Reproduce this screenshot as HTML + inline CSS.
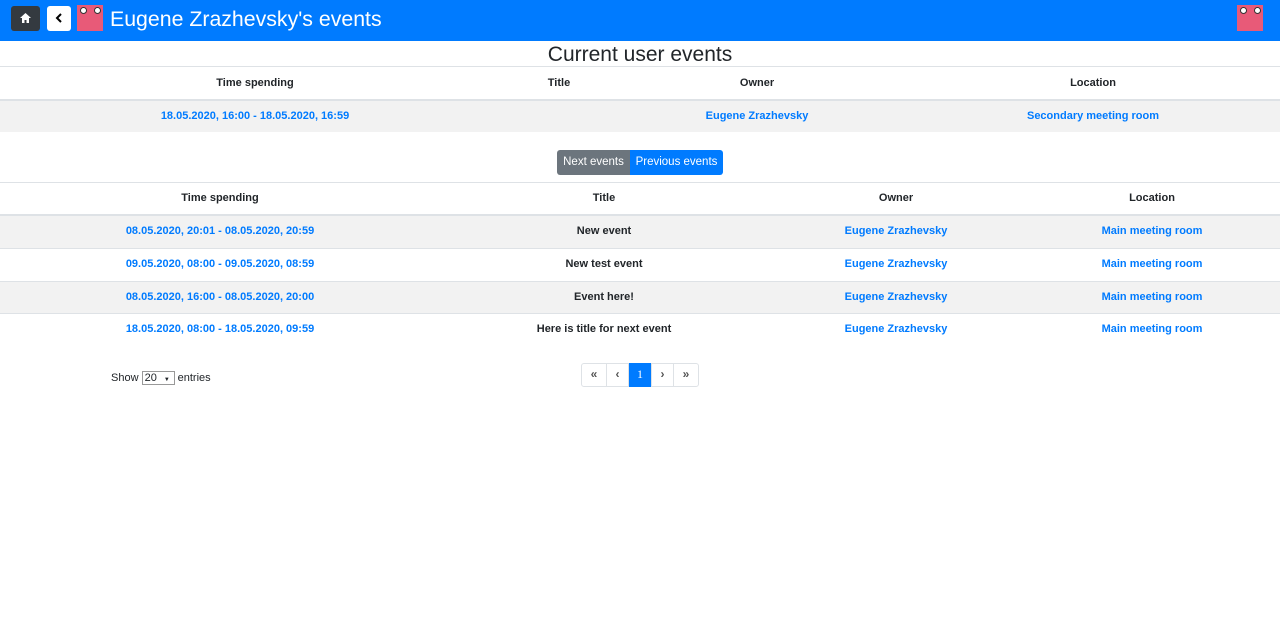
<!DOCTYPE html>
<html><head><style>
body{margin:0;width:1280px;height:643px;position:relative;font-family:"Liberation Sans",sans-serif;background:#fff;overflow:hidden;color:#212529}
.a{position:absolute}
.c{position:absolute;transform:translateX(-50%);white-space:nowrap;font-size:11px;font-weight:bold;line-height:13px}
.l{color:#007bff}
.line{position:absolute;left:0;width:1280px;height:1px;background:#dee2e6}
.g{position:absolute;left:0;width:1280px;background:#f2f2f2}
.pg{position:absolute;top:363px;height:24px;border:1px solid #dee2e6;box-sizing:border-box;font-size:12px;font-weight:bold;text-align:center;line-height:21px;color:#555}
</style></head><body>
<div class="a" style="left:0;top:0;width:1280px;height:41px;background:#007bff"></div>
<div class="a" style="left:11px;top:6px;width:29px;height:25px;background:#343a40;border-radius:3px"></div>
<svg class="a" style="left:19px;top:12px" width="13" height="12" viewBox="0 0 13 12"><path d="M6.5 1 L12 6 H10 V11 H7.5 V8 H5.5 V11 H3 V6 H1 Z" fill="#fff"/></svg>
<div class="a" style="left:47px;top:6px;width:24px;height:25px;background:#fff;border-radius:3px"></div>
<svg class="a" style="left:54px;top:12px" width="10" height="12"><path d="M7 2 L3 6 L7 10" stroke="#000" stroke-width="2" fill="none"/></svg>
<div class="a" style="left:77px;top:5px;width:26px;height:26px;background:#e85a78"></div>
<div class="a" style="left:80px;top:7px;width:5px;height:5px;border-radius:50%;background:#fff;border:1px solid #333"></div>
<div class="a" style="left:94px;top:7px;width:5px;height:5px;border-radius:50%;background:#fff;border:1px solid #333"></div>
<div class="a" style="left:110px;top:6px;color:#fff;font-size:21.3px;line-height:26px">Eugene Zrazhevsky's events</div>
<div class="a" style="left:1237px;top:5px;width:26px;height:26px;background:#e85a78"></div>
<div class="a" style="left:1240px;top:7px;width:5px;height:5px;border-radius:50%;background:#fff;border:1px solid #333"></div>
<div class="a" style="left:1254px;top:7px;width:5px;height:5px;border-radius:50%;background:#fff;border:1px solid #333"></div>

<div class="c" style="left:640px;top:42px;font-size:21px;font-weight:normal;line-height:26px">Current user events</div>
<div class="line" style="top:66px"></div>
<div class="c" style="left:255px;top:77px">Time spending</div>
<div class="c" style="left:559px;top:77px">Title</div>
<div class="c" style="left:757px;top:77px">Owner</div>
<div class="c" style="left:1093px;top:77px">Location</div>
<div class="line" style="top:99px;height:2px"></div>
<div class="g" style="top:101px;height:31px"></div>
<div class="c l" style="left:255px;top:110px">18.05.2020, 16:00 - 18.05.2020, 16:59</div>
<div class="c l" style="left:757px;top:110px">Eugene Zrazhevsky</div>
<div class="c l" style="left:1093px;top:110px">Secondary meeting room</div>

<div class="a" style="left:557px;top:150px;width:73px;height:25px;background:#6c757d;border-radius:3px 0 0 3px;color:#fff;font-size:11.5px;line-height:25px;text-align:center">Next events</div>
<div class="a" style="left:630px;top:150px;width:93px;height:25px;background:#007bff;border-radius:0 3px 3px 0;color:#fff;font-size:11.5px;line-height:25px;text-align:center">Previous events</div>

<div class="line" style="top:182px"></div>
<div class="c" style="left:220px;top:192px">Time spending</div>
<div class="c" style="left:604px;top:192px">Title</div>
<div class="c" style="left:896px;top:192px">Owner</div>
<div class="c" style="left:1152px;top:192px">Location</div>
<div class="line" style="top:214px;height:2px"></div>
<div class="g" style="top:216px;height:32px"></div>
<div class="line" style="top:248px"></div>
<div class="line" style="top:281px"></div>
<div class="g" style="top:282px;height:31px"></div>
<div class="line" style="top:313px"></div>

<div class="c l" style="left:220px;top:225px">08.05.2020, 20:01 - 08.05.2020, 20:59</div>
<div class="c" style="left:604px;top:225px">New event</div>
<div class="c l" style="left:896px;top:225px">Eugene Zrazhevsky</div>
<div class="c l" style="left:1152px;top:225px">Main meeting room</div>
<div class="c l" style="left:220px;top:258px">09.05.2020, 08:00 - 09.05.2020, 08:59</div>
<div class="c" style="left:604px;top:258px">New test event</div>
<div class="c l" style="left:896px;top:258px">Eugene Zrazhevsky</div>
<div class="c l" style="left:1152px;top:258px">Main meeting room</div>
<div class="c l" style="left:220px;top:291px">08.05.2020, 16:00 - 08.05.2020, 20:00</div>
<div class="c" style="left:604px;top:291px">Event here!</div>
<div class="c l" style="left:896px;top:291px">Eugene Zrazhevsky</div>
<div class="c l" style="left:1152px;top:291px">Main meeting room</div>
<div class="c l" style="left:220px;top:323px">18.05.2020, 08:00 - 18.05.2020, 09:59</div>
<div class="c" style="left:604px;top:323px">Here is title for next event</div>
<div class="c l" style="left:896px;top:323px">Eugene Zrazhevsky</div>
<div class="c l" style="left:1152px;top:323px">Main meeting room</div>

<div class="a" style="left:111px;top:371px;font-size:11px">Show <span style="display:inline-block;border:1px solid #999;width:29px;height:12px;line-height:12px;vertical-align:middle;padding-left:2px;box-sizing:content-box">20 <span style="font-size:6px;margin-left:4px">▼</span></span> entries</div>
<div class="pg" style="left:581px;width:26px;border-radius:3px 0 0 3px">«</div>
<div class="pg" style="left:606px;width:23px">‹</div>
<div class="pg" style="left:629px;width:22px;background:#007bff;color:#fff;border-color:#007bff;font-family:'Liberation Serif',serif;font-weight:normal">1</div>
<div class="pg" style="left:651px;width:23px">›</div>
<div class="pg" style="left:673px;width:26px;border-radius:0 3px 3px 0">»</div>
</body></html>
